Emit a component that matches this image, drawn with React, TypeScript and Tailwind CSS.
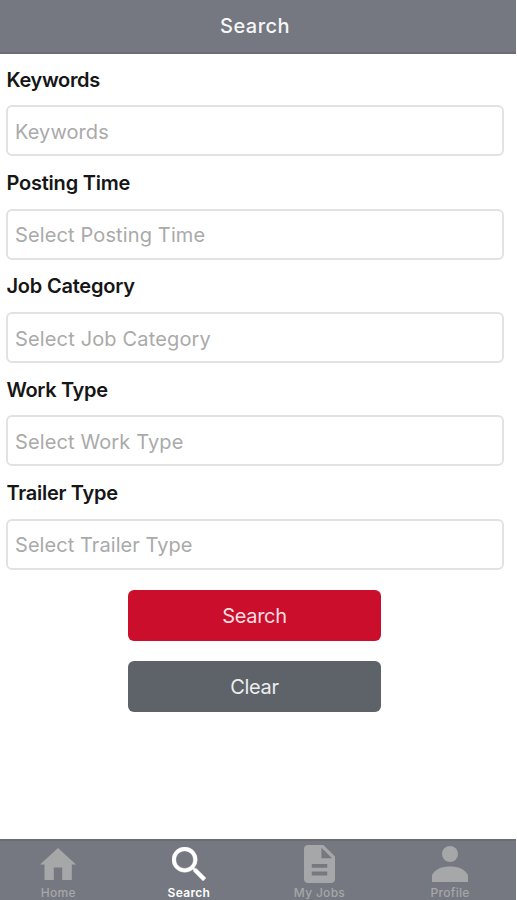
import React from "react";

type FieldProps = { label: string; placeholder: string; labelClass: string; textClass: string };

const fields: FieldProps[] = [
  { label: "Keywords", placeholder: "Keywords", labelClass: "tracking-[-0.35px]", textClass: "tracking-[0.08px]" },
  { label: "Posting Time", placeholder: "Select Posting Time", labelClass: "tracking-[-0.22px]", textClass: "tracking-[0.13px]" },
  { label: "Job Category", placeholder: "Select Job Category", labelClass: "tracking-[-0.22px]", textClass: "tracking-[0.15px]" },
  { label: "Work Type", placeholder: "Select Work Type", labelClass: "tracking-[-0.35px]", textClass: "tracking-[0.12px]" },
  { label: "Trailer Type", placeholder: "Select Trailer Type", labelClass: "tracking-[-0.28px]", textClass: "tracking-[0.06px]" },
];

function Field({ label, placeholder, labelClass, textClass }: FieldProps) {
  return (
    <div className="flex h-[103.4px] flex-col">
      <label className={`-ml-[0.5px] h-[51.8px] pt-[13px] text-[20px] leading-[26px] font-semibold text-[#161616] ${labelClass}`}>
        {label}
      </label>
      <div className={`-ml-px flex h-[51px] w-[497.5px] items-center rounded-[6px] border-2 border-[#e2e2e2] pt-[2px] pl-[7px] text-[20px] text-[#aaaaaa] ${textClass}`}>
        {placeholder}
      </div>
    </div>
  );
}

function Tab({ label, active, children }: { label: string; active?: boolean; children: React.ReactNode }) {
  return (
    <div className={`flex w-[130.6px] flex-col items-center ${active ? "font-semibold text-white" : "font-medium text-[#a6a7a8]"}`}>
      <div className="flex h-[45px] items-center justify-center">{children}</div>
      <span className="text-[12px] leading-[14px] tracking-[0.3px]">{label}</span>
    </div>
  );
}

export default function App() {
  return (
    <div className="flex h-[900px] w-[517px] flex-col overflow-hidden bg-white pr-px font-['Inter',sans-serif]">
      <header className="flex h-[53.5px] shrink-0 items-center justify-center border-b-2 border-[#6c6d73] bg-[#757880] pt-px pr-[6px] text-[20px] font-medium tracking-[0.45px] text-[#f5f6f8]">
        Search
      </header>
      <main className="flex flex-1 flex-col pl-[7px]">
        {fields.map((f) => (
          <Field key={f.label} {...f} />
        ))}
        <div className="mt-[19.5px] ml-[121px] flex w-[253px] flex-col gap-[20px] text-[20px] tracking-[-0.35px]">
          <button className="h-[51px] rounded-[6px] bg-[#cb0e2b] pt-[2px] text-[#fbdfe3]">Search</button>
          <button className="h-[51px] rounded-[6px] bg-[#5e6369] pt-[2px] text-[#eceeef]">Clear</button>
        </div>
      </main>
      <nav className="flex h-[61px] shrink-0 border-t-2 border-[#6c6d73] bg-[#757880]">
        <div className="-ml-[7px] flex">
          <Tab label="Home">
            <svg width="36" height="32" viewBox="0 0 36 32" fill="currentColor">
              <path d="M18 0L36 16.500H31.800V32H22.200V19.500H13.800V32H4.500V16.500H0z" />
            </svg>
          </Tab>
          <Tab label="Search" active>
            <svg width="34" height="34" viewBox="3 3 17.49 17.49" fill="currentColor" stroke="currentColor" strokeWidth="0.2">
              <path d="M15.5 14h-.79l-.28-.27A6.471 6.471 0 0 0 16 9.5 6.5 6.5 0 1 0 9.5 16c1.61 0 3.09-.59 4.23-1.57l.27.28v.79l5 4.99L20.49 19l-4.99-5zm-6 0C7.01 14 5 11.99 5 9.5S7.01 5 9.5 5 14 7.01 14 9.5 11.99 14 9.5 14z" />
            </svg>
          </Tab>
          <Tab label="My Jobs">
            <svg width="31" height="38" viewBox="4 2 16 20" preserveAspectRatio="none" fill="currentColor">
              <path d="M14 2H6c-1.1 0-1.99.9-1.99 2L4 20c0 1.1.89 2 1.99 2H18c1.1 0 2-.9 2-2V8l-6-6zm2 16H8v-2h8v2zm0-4H8v-2h8v2zm-3-5V3.5L18.5 9H13z" />
            </svg>
          </Tab>
          <Tab label="Profile">
            <svg width="36" height="36" viewBox="0 0 36 36" fill="currentColor">
              <circle cx="18" cy="8" r="8" />
              <path d="M0 36v-7C3 23 10 20.500 18 20.500S33 23 36 29v7z" />
            </svg>
          </Tab>
        </div>
      </nav>
    </div>
  );
}
